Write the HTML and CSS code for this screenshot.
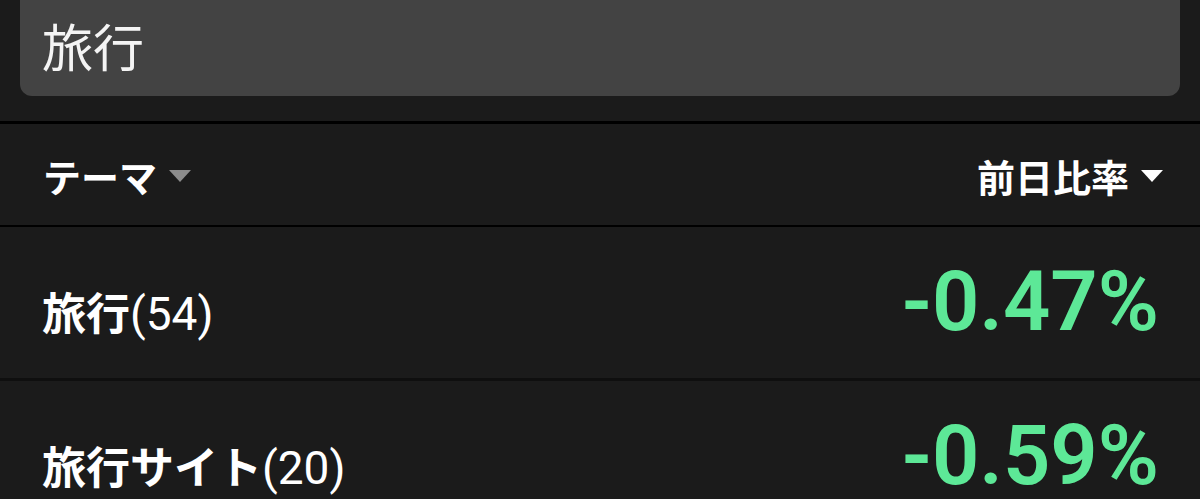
FILE: index.html
```html
<!DOCTYPE html>
<html lang="ja">

<head>
  <meta charset="UTF-8">
  <meta name="viewport" content="width=device-width, initial-scale=1.0">
  <title>テーマ</title>

  <link rel="stylesheet" href="styles.css">

</head>

<body>
  <div class="search-wrap">
    <div class="search">旅行</div>
  </div>

  <ul id="theme-list">
    <li class="head">
      <span class="sort">テーマ<i class="tri tri-off"></i></span>
      <span class="sort">前日比率<i class="tri"></i></span>
    </li>
    <li class="row">
      <span class="name">旅行<span class="count">(54)</span></span>
      <span class="rate">-0.47%</span>
    </li>
    <li class="row">
      <span class="name">旅行サイト<span class="count">(20)</span></span>
      <span class="rate">-0.59%</span>
    </li>
  </ul>
</body>

</html>
```

FILE: styles.css
```css
body {
  margin: 0;
  background: #1b1b1b;
  color: #fff;
  font-family: Roboto, "Noto Sans CJK JP", sans-serif;
}

/* 検索ボックス */
.search-wrap {
  padding: 0 20px 25px;
}
.search {
  height: 96px;
  padding-left: 22px;
  background: #434343;
  border-radius: 0 0 12px 12px;
  font-size: 51px;
  line-height: 90px;
  color: #f4f4f4;
  font-family: "Noto Sans CJK JP", sans-serif;
}

#theme-list {
  margin: 0;
  padding: 0;
  list-style: none;
  border-top: 3px solid #000;
}

.head {
  display: flex;
  justify-content: space-between;
  align-items: center;
  height: 99px;
  padding: 2px 37px 0 43px;
  border-bottom: 2px solid #000;
}
.sort {
  display: flex;
  align-items: center;
  font-family: "Noto Sans CJK JP", sans-serif;
  font-weight: 700;
  font-size: 38px;
}

/* 小さい三角 */
.tri {
  width: 0;
  height: 0;
  margin-left: 12px;
  border-left: 11px solid transparent;
  border-right: 11px solid transparent;
  border-top: 12px solid #fff;
}
.tri-off {
  border-top-color: #8c8c8c;
}

.row {
  display: flex;
  justify-content: space-between;
  align-items: baseline;
  height: 151px;
  padding: 0 41px 0 42px;
  border-bottom: 3px solid #0f0f0f;
}
.name {
  font-family: "Noto Sans CJK JP", sans-serif;
  font-weight: 700;
  font-size: 44px;
  line-height: 168px;
}
.count {
  font-family: Roboto, sans-serif;
  font-weight: 400;
  font-size: 46px;
}
.rate {
  font-weight: 600;
  font-size: 83px;
  color: #5de897;
}
```
